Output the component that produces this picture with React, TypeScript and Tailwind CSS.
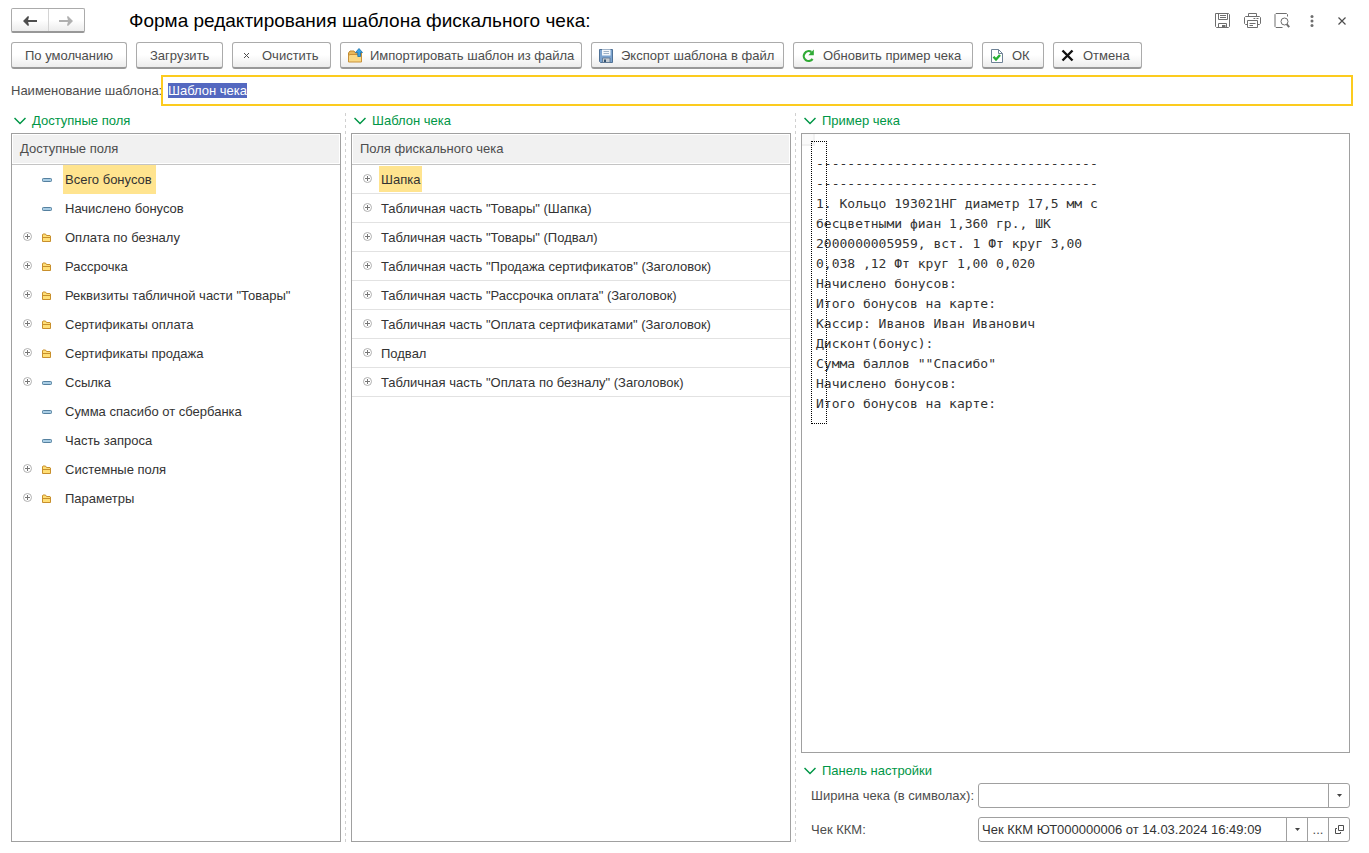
import { useEffect, useRef, type ReactNode } from "react";

type IconKind = "folder" | "field";

interface FieldRow {
  label: string;
  icon: IconKind;
  expandable: boolean;
}

const availableFields: FieldRow[] = [
  { label: "Всего бонусов", icon: "field", expandable: false },
  { label: "Начислено бонусов", icon: "field", expandable: false },
  { label: "Оплата по безналу", icon: "folder", expandable: true },
  { label: "Рассрочка", icon: "folder", expandable: true },
  { label: 'Реквизиты табличной части "Товары"', icon: "folder", expandable: true },
  { label: "Сертификаты оплата", icon: "folder", expandable: true },
  { label: "Сертификаты продажа", icon: "folder", expandable: true },
  { label: "Ссылка", icon: "field", expandable: true },
  { label: "Сумма спасибо от сбербанка", icon: "field", expandable: false },
  { label: "Часть запроса", icon: "field", expandable: false },
  { label: "Системные поля", icon: "folder", expandable: true },
  { label: "Параметры", icon: "folder", expandable: true },
];

const templateFields = [
  "Шапка",
  'Табличная часть "Товары" (Шапка)',
  'Табличная часть "Товары" (Подвал)',
  'Табличная часть "Продажа сертификатов" (Заголовок)',
  'Табличная часть "Рассрочка оплата" (Заголовок)',
  'Табличная часть "Оплата сертификатами" (Заголовок)',
  "Подвал",
  'Табличная часть "Оплата по безналу" (Заголовок)',
];

const receiptLines = [
  "-".repeat(36),
  "-".repeat(36),
  "1. Кольцо 193021НГ диаметр 17,5 мм с",
  "бесцветными фиан 1,360 гр., ШК",
  "2000000005959, вст. 1 Фт круг 3,00",
  "0,038 ,12 Фт круг 1,00 0,020",
  "Начислено бонусов:",
  "Итого бонусов на карте:",
  "Кассир: Иванов Иван Иванович",
  "Дисконт(бонус):",
  'Сумма баллов ""Спасибо"',
  "Начислено бонусов:",
  "Итого бонусов на карте:",
];

function ArrowLeft() {
  return (
    <svg width="14" height="10" viewBox="0 0 14 10" fill="none" aria-hidden="true">
      <path d="M14 5H3" stroke="#4d4d4d" strokeWidth="2" />
      <path d="M0 5 5 0 6 0.8 4.8 5 6 9.2 5 10Z" fill="#4d4d4d" />
    </svg>
  );
}

function ArrowRight() {
  return (
    <svg width="14" height="10" viewBox="0 0 14 10" fill="none" aria-hidden="true">
      <path d="M0 5H11" stroke="#b0b0b0" strokeWidth="2" />
      <path d="M14 5 9 0 8 0.8 9.2 5 8 9.2 9 10Z" fill="#b0b0b0" />
    </svg>
  );
}

function SaveIcon() {
  return (
    <svg width="16" height="16" viewBox="0 0 16 16" fill="none" stroke="#6e6e6e" aria-hidden="true">
      <path d="M1.5 0.5H14.5L15.5 1.5V13.5L14.5 14.5H2.5L1.5 13.5Z" />
      <path d="M4.5 0.5V6.5H13.5V0.5M6 2.5H12M6 4.5H12" />
      <path d="M4.5 14.5V10.5H12.5V14.5" />
      <path d="M8 12H11.5V15H8Z" fill="#6e6e6e" stroke="none" />
    </svg>
  );
}

function PrintIcon() {
  return (
    <svg width="17" height="16" viewBox="0 0 17 16" fill="none" stroke="#6e6e6e" aria-hidden="true">
      <path d="M4.5 3.5V0.5H12.5V3.5" />
      <path d="M3.5 11.5H1.5L0.5 10.5V4.5L1.5 3.5H15.5L16.5 4.5V10.5L15.5 11.5H13.5" />
      <path d="M3.5 7.5H13.5V14.5H3.5Z" />
      <path d="M5.5 10.5H11.5M5.5 12.5H9M9.5 5.5H11.3M12.5 5.5H14.5" />
    </svg>
  );
}

function PreviewIcon() {
  return (
    <svg width="16" height="16" viewBox="0 0 16 16" fill="none" stroke="#6e6e6e" aria-hidden="true">
      <path d="M8.5 14.5H2L1 13.5V1.5L2 0.5H12.5L13.5 1.5V3.5" />
      <circle cx="10.5" cy="8.5" r="3.5" />
      <path d="M12.7 11.2 15.2 14.2" strokeWidth="2" />
    </svg>
  );
}

function DotsIcon() {
  return (
    <svg width="4" height="12" viewBox="0 0 4 12" fill="#6e6e6e" aria-hidden="true">
      <circle cx="2" cy="1.6" r="1.5" />
      <circle cx="2" cy="6" r="1.5" />
      <circle cx="2" cy="10.4" r="1.5" />
    </svg>
  );
}

function CloseIcon() {
  return (
    <svg width="8" height="8" viewBox="0 0 8 8" stroke="#4d4d4d" strokeWidth="1.2" aria-hidden="true">
      <path d="M0.5 0.5 7.5 7.5M7.5 0.5 0.5 7.5" />
    </svg>
  );
}

function ClearIcon() {
  return (
    <svg width="16" height="16" viewBox="0 0 16 16" stroke="#4d4d4d" aria-hidden="true">
      <path d="M4 5 9 10M9 5 4 10" />
    </svg>
  );
}

function ImportIcon() {
  return (
    <svg width="16" height="16" viewBox="0 0 16 16" aria-hidden="true">
      <path d="M0.5 13.5V5L2 3H6L7.5 5H13.5V13.5Z" fill="#e9b85a" stroke="#bf8a30" />
      <path d="M0.5 14V8L1.5 6.5H13.5V14Z" fill="#fad984" stroke="#c8913a" />
      <path d="M11 0.5 14.5 4.5H12.5V8.5H9.8V4.5H7.5Z" fill="#35a3e6" stroke="#1c6fa8" strokeWidth="0.8" />
    </svg>
  );
}

function ExportIcon() {
  return (
    <svg width="16" height="16" viewBox="0 0 16 16" aria-hidden="true">
      <path d="M0.5 1.5H13.5V14.5H1.5L0.5 13.5Z" fill="#7ba3cf" stroke="#4f7196" />
      <path d="M3 1.5H11.5V7.5H3Z" fill="#f4f8fc" />
      <path d="M4.5 3.5H10M4.5 5.5H10" stroke="#9fb3c8" />
      <path d="M3.5 10H11V14.5H3.5Z" fill="#c5ccd2" stroke="#58728f" strokeWidth="0.8" />
      <path d="M5 11.5H7V14H5Z" fill="#33516f" />
    </svg>
  );
}

function RefreshIcon() {
  return (
    <svg width="16" height="16" viewBox="0 0 16 16" fill="none" aria-hidden="true">
      <path d="M11.6 11A4.9 4.9 0 1 1 10.4 4" stroke="#2faa35" strokeWidth="2.2" />
      <path d="M12.8 1.5V7.2H7.3Z" fill="#2faa35" />
    </svg>
  );
}

function OkIcon() {
  return (
    <svg width="16" height="16" viewBox="0 0 16 16" fill="none" aria-hidden="true">
      <path d="M1.5 1.5H8.5L12.5 5.5V14.5H1.5Z" fill="#fff" stroke="#6e8296" />
      <path d="M8.5 1.5V5.5H12.5" stroke="#6e8296" />
      <path d="M3.5 8.8 6 11.5 10 7" stroke="#27b034" strokeWidth="2.4" />
    </svg>
  );
}

function CancelIcon() {
  return (
    <svg width="16" height="16" viewBox="0 0 16 16" stroke="#111" strokeWidth="2.4" aria-hidden="true">
      <path d="M1.5 2.5 11.5 12.5M11.5 2.5 1.5 12.5" />
    </svg>
  );
}

function ExpandIcon() {
  return (
    <svg width="9" height="9" viewBox="0 0 9 9" fill="none" aria-hidden="true">
      <circle cx="4.5" cy="4.5" r="4" stroke="#b0b0b0" />
      <path d="M2 4.5H7M4.5 2V7" stroke="#777" />
    </svg>
  );
}

function FolderIcon() {
  return (
    <svg width="10" height="9" viewBox="0 0 10 9" aria-hidden="true">
      <path d="M0.5 8.5V1.5L1 1H3.5L4.5 2.5H8L8.5 3V8.5Z" fill="#ffdf76" stroke="#c88f2c" />
      <path d="M1 4.5H8.5" stroke="#c88f2c" />
    </svg>
  );
}

function FieldIcon() {
  return (
    <svg width="10" height="5" viewBox="0 0 10 5" aria-hidden="true">
      <rect x="0.5" y="1.5" width="9" height="3" rx="0.8" fill="#a9cde4" stroke="#55809f" />
    </svg>
  );
}

function DropIcon() {
  return (
    <svg width="5" height="3" viewBox="0 0 5 3" fill="#444" aria-hidden="true">
      <path d="M0 0H5L2.5 3Z" />
    </svg>
  );
}

function OpenIcon() {
  return (
    <svg width="9" height="9" viewBox="0 0 9 9" fill="none" stroke="#4d4d4d" aria-hidden="true">
      <path d="M3.5 0.5H8.5V5.5H3.5Z" />
      <path d="M2 3.5H0.5V8.5H5.5V7" />
    </svg>
  );
}

function ToolButton({ icon, width, children }: { icon?: ReactNode; width: string; children: ReactNode }) {
  return (
    <button
      type="button"
      className={
        "flex h-[27px] items-center gap-1.5 rounded-[3px] border border-b-2 border-[#ababab] border-b-[#989898] bg-linear-to-b from-white from-50% to-[#ececec] pt-0.5 whitespace-nowrap " +
        width +
        (icon ? " pl-[7px]" : " pl-[13px]")
      }
    >
      {icon}
      {children}
    </button>
  );
}

function HeaderButton({ label, children }: { label: string; children: ReactNode }) {
  return (
    <button type="button" aria-label={label} className="flex h-6 w-[30px] items-center justify-center">
      {children}
    </button>
  );
}

function GroupTitle({ children }: { children: ReactNode }) {
  return (
    <button type="button" className="flex h-4 items-center gap-1.5 self-start pl-[3px] leading-4 text-[#009646]">
      <svg width="12" height="8" viewBox="0 0 12 8" fill="none" aria-hidden="true">
        <path d="M0.5 1 6 6.5 11.5 1" stroke="#009646" strokeWidth="1.5" />
      </svg>
      {children}
    </button>
  );
}

function Divider() {
  return (
    <div className="flex pl-1">
      <div className="w-px bg-[repeating-linear-gradient(to_bottom,#d0d0d0_0px,#d0d0d0_3px,transparent_3px,transparent_6px)]" />
    </div>
  );
}

function ListHeader({ children }: { children: ReactNode }) {
  return (
    <thead>
      <tr>
        <th className="h-[31px] border-b border-[#c4c4c4] p-px text-left font-normal">
          <div className="flex h-7 items-center bg-[#f1f1f1] pl-[7px] text-[#4d4d4d]">{children}</div>
        </th>
      </tr>
    </thead>
  );
}

const panel = "mt-1 grow border border-[#a0a0a0] bg-white";
const cellButton = "flex h-full items-center justify-center border-l border-[#a0a0a0] w-[21px]";

export default function App() {
  const nameRef = useRef<HTMLInputElement>(null);

  useEffect(() => {
    nameRef.current?.focus();
    nameRef.current?.select();
  }, []);

  return (
    <div className="flex min-h-screen flex-col bg-white pt-2 pr-4 pb-[11px] pl-[11px] font-['Liberation_Sans',Arial,sans-serif] text-[13px] leading-4 text-[#4d4d4d]">
      <header className="-mr-1 flex h-[25px] items-center">
        <div className="flex h-full w-[74px] rounded-xs border border-b-2 border-[#ababab] border-b-[#989898] bg-linear-to-b from-white from-50% to-[#ececec]">
          <button type="button" aria-label="Назад" className="flex flex-1 items-center justify-center pt-0.5">
            <ArrowLeft />
          </button>
          <button
            type="button"
            aria-label="Вперед"
            className="flex flex-1 items-center justify-center border-l border-[#d4d4d4] pt-0.5"
          >
            <ArrowRight />
          </button>
        </div>
        <h1 className="ml-11 grow text-[19px] leading-6 text-black">Форма редактирования шаблона фискального чека:</h1>
        <HeaderButton label="Сохранить">
          <SaveIcon />
        </HeaderButton>
        <HeaderButton label="Печать">
          <PrintIcon />
        </HeaderButton>
        <HeaderButton label="Просмотр">
          <PreviewIcon />
        </HeaderButton>
        <HeaderButton label="Еще">
          <DotsIcon />
        </HeaderButton>
        <HeaderButton label="Закрыть">
          <CloseIcon />
        </HeaderButton>
      </header>

      <div className="mt-[9px] flex flex-wrap gap-[9px]">
        <ToolButton width="w-[116px]">По умолчанию</ToolButton>
        <ToolButton width="w-[87px]">Загрузить</ToolButton>
        <ToolButton width="w-[99px]" icon={<ClearIcon />}>
          Очистить
        </ToolButton>
        <ToolButton width="w-[242px]" icon={<ImportIcon />}>
          Импортировать шаблон из файла
        </ToolButton>
        <ToolButton width="w-[193px]" icon={<ExportIcon />}>
          Экспорт шаблона в файл
        </ToolButton>
        <ToolButton width="w-[180px]" icon={<RefreshIcon />}>
          Обновить пример чека
        </ToolButton>
        <ToolButton width="w-[62px]" icon={<OkIcon />}>
          ОК
        </ToolButton>
        <ToolButton width="w-[89px]" icon={<CancelIcon />}>
          Отмена
        </ToolButton>
      </div>

      <div className="mt-1.5 flex items-center">
        <label htmlFor="template-name" className="w-[150px] whitespace-nowrap">
          Наименование шаблона:
        </label>
        <input
          id="template-name"
          ref={nameRef}
          defaultValue="Шаблон чека"
          className="h-[31px] min-w-0 grow border-2 border-[#fccb1e] px-[5px] text-[#333] outline-none selection:bg-[#5468c0] selection:text-white"
        />
      </div>

      <main className="mt-[7px] mr-[3px] grid grow grid-cols-[330fr_10px_440fr_10px_549fr]">
        <section className="flex min-w-0 flex-col">
          <GroupTitle>Доступные поля</GroupTitle>
          <div className={panel}>
            <table className="w-full border-separate border-spacing-0 text-[#333]">
              <ListHeader>Доступные поля</ListHeader>
              <tbody>
                {availableFields.map((row, i) => (
                  <tr key={row.label}>
                    <td className="h-[29px] p-0">
                      <div className="flex h-[29px] items-center pl-[11px]">
                        <span className="flex w-[19px] pb-0.5">{row.expandable && <ExpandIcon />}</span>
                        <span className="flex w-[21px]">{row.icon === "folder" ? <FolderIcon /> : <FieldIcon />}</span>
                        <span
                          className={
                            "flex h-full items-center pr-1 pl-0.5 whitespace-nowrap " +
                            (i === 0 ? "bg-[#ffe48f]" : "")
                          }
                        >
                          {row.label}
                        </span>
                      </div>
                    </td>
                  </tr>
                ))}
              </tbody>
            </table>
          </div>
        </section>

        <Divider />

        <section className="flex min-w-0 flex-col">
          <GroupTitle>Шаблон чека</GroupTitle>
          <div className={panel}>
            <table className="w-full border-separate border-spacing-0 text-[#333]">
              <ListHeader>Поля фискального чека</ListHeader>
              <tbody>
                {templateFields.map((label, i) => (
                  <tr key={label}>
                    <td className="h-[29px] border-b border-[#e2e2e2] p-0">
                      <div className="flex h-7 items-center pl-[11px]">
                        <span className="flex w-4 pb-0.5">
                          <ExpandIcon />
                        </span>
                        <span
                          className={
                            "flex h-[26px] items-center px-0.5 pt-0.5 whitespace-nowrap " +
                            (i === 0 ? "bg-[#ffe48f]" : "")
                          }
                        >
                          {label}
                        </span>
                      </div>
                    </td>
                  </tr>
                ))}
              </tbody>
            </table>
          </div>
        </section>

        <Divider />

        <section className="flex min-w-0 flex-col">
          <GroupTitle>Пример чека</GroupTitle>
          <div className={panel + " relative"}>
            <div className="absolute top-0 left-0 h-3 w-[13px] border-r-2 border-b-2 border-[#f1f1f1] bg-[#fafafa]" />
            <div className="relative mt-[7px] ml-[9px] pt-[13px] pb-2.5 pl-[5px] font-['DejaVu_Sans_Mono','Liberation_Mono',monospace] text-[13px] leading-5 text-[#333]">
              {receiptLines.map((line, i) => (
                <div key={i} className="whitespace-pre">
                  {line}
                </div>
              ))}
              <div className="absolute inset-y-0 left-0 w-4 border border-dotted border-black" />
            </div>
          </div>

          <div className="mt-[10px] flex flex-col">
            <GroupTitle>Панель настройки</GroupTitle>
            <div className="mt-1 grid grid-cols-[167px_1fr] items-center gap-y-[9px] pl-2.5">
              <label htmlFor="receipt-width">Ширина чека (в символах):</label>
              <div className="flex h-[25px] items-center rounded-[3px] border border-[#a0a0a0]">
                <input id="receipt-width" className="h-full min-w-0 grow px-[3px] text-[#333] outline-none" />
                <button type="button" aria-label="Выбрать ширину" className={cellButton}>
                  <DropIcon />
                </button>
              </div>
              <label htmlFor="receipt-doc">Чек ККМ:</label>
              <div className="flex h-[25px] items-center rounded-[3px] border border-[#a0a0a0]">
                <input
                  id="receipt-doc"
                  defaultValue="Чек ККМ ЮТ000000006 от 14.03.2024 16:49:09"
                  className="h-full min-w-0 grow px-[3px] text-[#333] outline-none"
                />
                <button type="button" aria-label="Выбрать из списка" className={cellButton}>
                  <DropIcon />
                </button>
                <button type="button" aria-label="Показать все" className={cellButton}>
                  ...
                </button>
                <button type="button" aria-label="Открыть" className={cellButton}>
                  <OpenIcon />
                </button>
              </div>
            </div>
          </div>
        </section>
      </main>
    </div>
  );
}
